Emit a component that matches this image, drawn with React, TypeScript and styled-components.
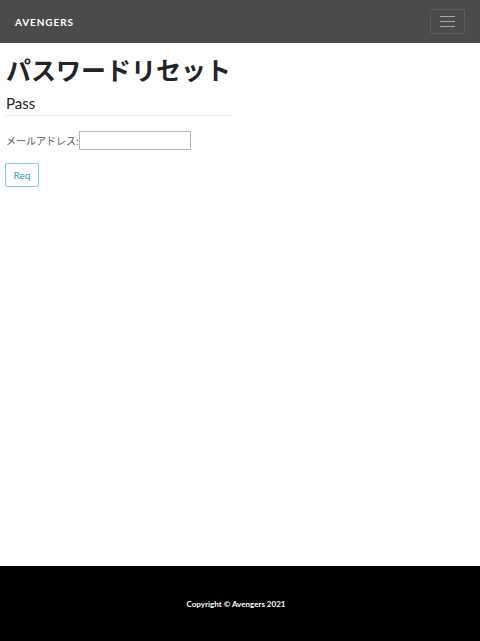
import * as React from 'react';
import styled, { createGlobalStyle } from 'styled-components';

const GlobalStyle = createGlobalStyle`
  html, body {
    margin: 0;
    padding: 0;
    height: 100%;
  }
  body {
    font-family: Lato, "Noto Sans CJK JP", sans-serif;
    color: #212529;
    background: #fff;
  }
  #root {
    min-height: 100%;
    display: flex;
    flex-direction: column;
  }
`;

const Page = styled.div`
  min-height: 641px;
  display: flex;
  flex-direction: column;
`;

const NavBar = styled.nav`
  height: 43px;
  background: #4b4b4b;
  display: flex;
  align-items: center;
  justify-content: space-between;
  padding: 0 15px;
  box-sizing: border-box;
`;

const Brand = styled.a`
  color: #fff;
  font-weight: 700;
  font-size: 10px;
  letter-spacing: 0.9px;
  text-decoration: none;
`;

const Toggler = styled.button`
  width: 35px;
  height: 25px;
  background: transparent;
  border: 1px solid #5c5c5c;
  border-radius: 2px;
  display: flex;
  flex-direction: column;
  align-items: center;
  justify-content: center;
  gap: 4px;
  padding: 0;
`;

const Bar = styled.span`
  display: block;
  width: 15px;
  height: 1px;
  background: #a8a8a8;
`;

const Main = styled.main`
  flex: 1;
  padding: 0 5px;
`;

const Title = styled.h1`
  margin: 11px 0 0 1px;
  font-family: "Noto Sans CJK JP", sans-serif;
  font-size: 25px;
  font-weight: 700;
  line-height: 30px;
`;

const SubTitle = styled.h2`
  margin: 10px 0 0;
  width: 225px;
  font-size: 15px;
  font-weight: 400;
  line-height: 18px;
  padding: 0 1px 3px;
  border-bottom: 1px solid #eee;
`;

const FormRow = styled.div`
  margin-top: 15px;
  display: flex;
  align-items: center;
  font-family: "Noto Sans CJK JP", sans-serif;
  font-size: 10px;
  color: #555;
`;

const Label = styled.label`
  padding-left: 1px;
`;

const Input = styled.input`
  width: 112px;
  height: 19px;
  box-sizing: border-box;
  border: 1px solid #b5b5b5;
  padding: 0 3px;
  margin: 0;
`;

const ReqButton = styled.button`
  margin-top: 13px;
  width: 34px;
  height: 24px;
  background: #fff;
  border: 1px solid #7fcbd9;
  border-radius: 2px;
  color: #2a9fb8;
  font-family: Lato, sans-serif;
  font-size: 10px;
  padding: 0;
`;

const Footer = styled.footer`
  height: 75px;
  box-sizing: border-box;
  background: #000;
  display: flex;
  align-items: center;
  justify-content: center;
  padding: 0 8px 0 0;
  color: #fff;
  font-size: 8px;
  font-weight: 700;
`;

export default function App() {
  return (
    <Page>
      <GlobalStyle />
      <NavBar>
        <Brand href="#">AVENGERS</Brand>
        <Toggler aria-label="menu">
          <Bar />
          <Bar />
          <Bar />
        </Toggler>
      </NavBar>
      <Main>
        <Title>パスワードリセット</Title>
        <SubTitle>Pass</SubTitle>
        <FormRow>
          <Label>メールアドレス:</Label>
          <Input type="text" />
        </FormRow>
        <ReqButton>Req</ReqButton>
      </Main>
      <Footer>Copyright © Avengers 2021</Footer>
    </Page>
  );
}
